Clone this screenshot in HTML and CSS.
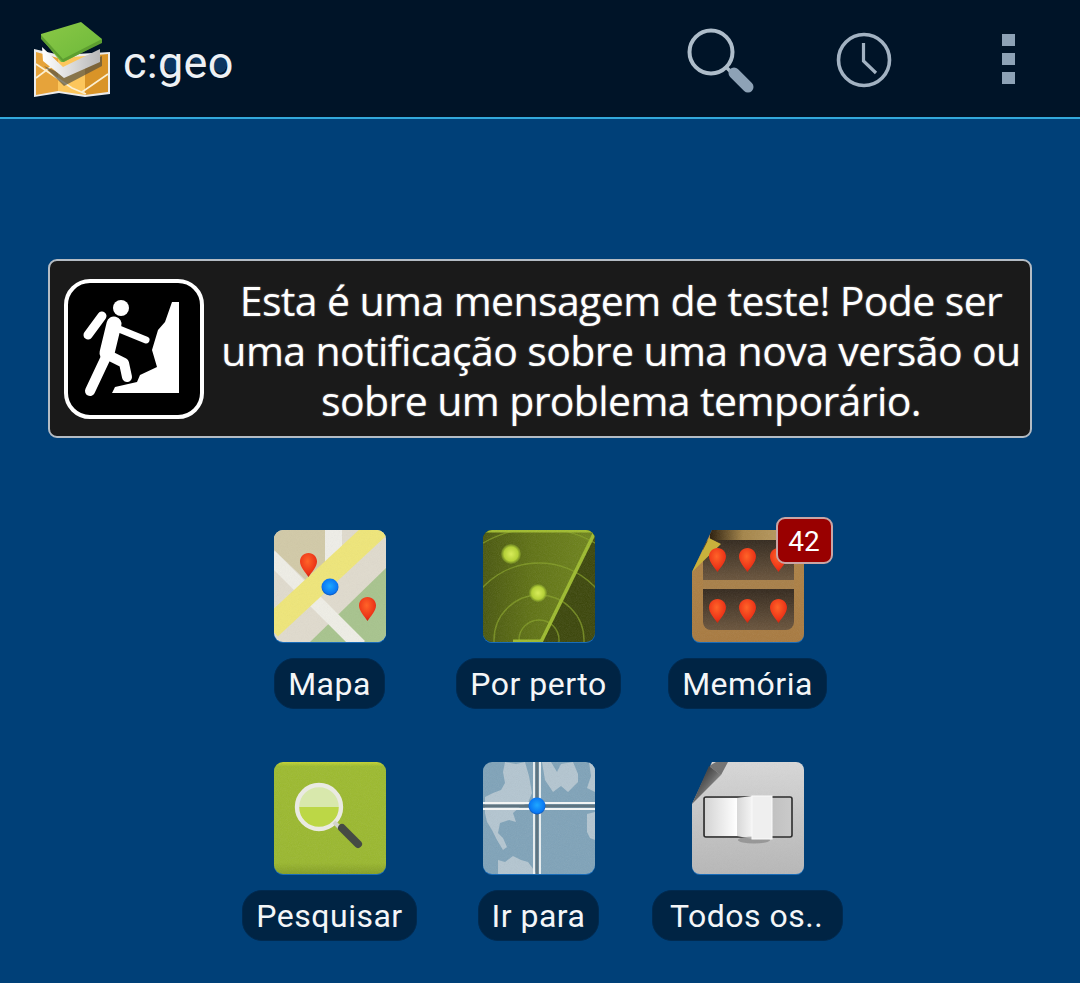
FILE: index.html
```html
<!DOCTYPE html>
<html lang="pt">
<head>
<meta charset="utf-8">
<title>c:geo</title>
<link rel="stylesheet" href="styles.css">
</head>
<body>
<svg class="defs" aria-hidden="true">
  <defs>
    <radialGradient id="pinFill" cx="45%" cy="35%" r="70%"><stop offset="0" stop-color="#ff6428"/><stop offset=".7" stop-color="#ec3418"/><stop offset="1" stop-color="#c0200f"/></radialGradient>
    <radialGradient id="blueDot" cx="50%" cy="45%" r="55%"><stop offset="0" stop-color="#1ea8ff"/><stop offset=".8" stop-color="#0a78f4"/><stop offset="1" stop-color="#0a50b0"/></radialGradient>
    <radialGradient id="radarDot" cx="50%" cy="50%" r="50%"><stop offset="0" stop-color="#d8ec5a"/><stop offset=".7" stop-color="#b4d038"/><stop offset="1" stop-color="#8aa82a" stop-opacity=".4"/></radialGradient>
    <linearGradient id="radarSweep" x1="0" y1="0" x2="1" y2="0"><stop offset="0" stop-color="#48560c"/><stop offset=".45" stop-color="#5f7212"/><stop offset="1" stop-color="#6e841a"/></linearGradient>
    <linearGradient id="greenBody" x1="0" y1="0" x2="0" y2="1"><stop offset="0" stop-color="#c4d432"/><stop offset=".04" stop-color="#9dbb2e"/><stop offset=".9" stop-color="#9ab82e"/><stop offset="1" stop-color="#849f24"/></linearGradient>
    <linearGradient id="silverBody" x1="0" y1="0" x2="0" y2="1"><stop offset="0" stop-color="#d8d8d8"/><stop offset=".5" stop-color="#c6c6c6"/><stop offset="1" stop-color="#b8b8b8"/></linearGradient>
    <linearGradient id="woodBody" x1="0" y1="0" x2="0" y2="1"><stop offset="0" stop-color="#b08448"/><stop offset="1" stop-color="#a87a40"/></linearGradient>
    <linearGradient id="shelfBack" x1="0" y1="0" x2="0" y2="1"><stop offset="0" stop-color="#33291e"/><stop offset=".45" stop-color="#6a543c"/><stop offset=".5" stop-color="#2e241a"/><stop offset="1" stop-color="#6a543c"/></linearGradient>
    <linearGradient id="rollTop" x1="0" y1="0" x2="1" y2="0"><stop offset="0" stop-color="#2a1c0a"/><stop offset=".35" stop-color="#a48448"/><stop offset="1" stop-color="#c4a66c"/></linearGradient>
    <linearGradient id="slotLeft" x1="0" y1="0" x2="1" y2="0"><stop offset="0" stop-color="#d4d4d4"/><stop offset="1" stop-color="#ffffff"/></linearGradient>
    <linearGradient id="slotBend" x1="0" y1="0" x2="1" y2="0"><stop offset="0" stop-color="#d8d8d8"/><stop offset="1" stop-color="#f4f4f4"/></linearGradient>
    <linearGradient id="slotRight" x1="0" y1="0" x2="1" y2="0"><stop offset="0" stop-color="#a4a4a4"/><stop offset="1" stop-color="#cacaca"/></linearGradient>
    <linearGradient id="foldSilver" x1="0" y1="0" x2="1" y2="1"><stop offset="0" stop-color="#111"/><stop offset=".5" stop-color="#666"/><stop offset="1" stop-color="#e0e0e0"/></linearGradient>
    <linearGradient id="logoGreen" x1="0" y1="0" x2="1" y2="1"><stop offset="0" stop-color="#8ac846"/><stop offset="1" stop-color="#6cb83a"/></linearGradient>
    <linearGradient id="logoWhite" x1="0" y1="0" x2="1" y2="0"><stop offset="0" stop-color="#fff"/><stop offset="1" stop-color="#b8b8b8"/></linearGradient>
    <filter id="grain" x="0" y="0" width="100%" height="100%"><feTurbulence type="fractalNoise" baseFrequency="1.1" numOctaves="2" seed="4"/><feColorMatrix type="saturate" values="0"/></filter>
    <g id="pin"><path d="M8.5 0C3.6 0 0 3.8 0 8.6 0 14 5.4 19.5 8.5 24 11.6 19.5 17 14 17 8.6 17 3.8 13.4 0 8.5 0Z" fill="url(#pinFill)"/></g>
    <clipPath id="roundClip"><rect width="112" height="112" rx="9"/></clipPath>
    <clipPath id="cutClip"><path d="M20 0H104a8 8 0 0 1 8 8V104a8 8 0 0 1-8 8H8a8 8 0 0 1-8-8V42Z"/></clipPath>
  </defs>
</svg>

<header class="appbar">
  <div class="brand">
    <svg class="logo" viewBox="0 0 80 78" width="80" height="78" aria-hidden="true">
      <path d="M2 27 28 33 78 30V72L53 75 27 71 2 75Z" fill="#ececec"/>
      <path d="M4 30 26 36V69L4 73Z" fill="#e6a33a"/>
      <path d="M26 36 53 34V73L26 69Z" fill="#fcc65c"/>
      <path d="M53 34 76 32V70L53 73Z" fill="#d99428"/>
      <path d="M4 42 40 66 54 72M4 56 20 44M50 70 76 52M30 52 50 40" stroke="#fbefd2" stroke-width="1.6" fill="none"/>
      <path d="M12 44 32 64 70 44V34L30 52Z" fill="#4a4a42" opacity=".65"/>
      <path d="M10 25 31 45 68 27V40L32 56 11 39Z" fill="url(#logoWhite)"/>
      <path d="M9 12 49 0 70 17 70 20 32 40 29 40 9 16Z" fill="url(#logoGreen)"/>
      <path d="M9 13 31 37 70 17V21L31 40 9 17Z" fill="#5d9e30"/>
    </svg>
    <span class="title">c:geo</span>
  </div>
  <nav class="actions">
    <div class="action search">
      <svg viewBox="0 0 80 80" width="80" height="80" aria-hidden="true">
        <circle cx="31" cy="31" r="21.5" fill="none" stroke="#aebdca" stroke-width="4"/>
        <path d="M46 46 52 52" stroke="#aebdca" stroke-width="3.5"/>
        <path d="M54 52 68 66" stroke="#8da2b6" stroke-width="11" stroke-linecap="round"/>
      </svg>
    </div>
    <div class="action">
      <svg viewBox="0 0 60 60" width="60" height="60" aria-hidden="true">
        <circle cx="30" cy="30" r="25.5" fill="none" stroke="#a2b2c2" stroke-width="3.6"/>
        <path d="M29.5 13V31L42 43" fill="none" stroke="#a2b2c2" stroke-width="3.2"/>
      </svg>
    </div>
    <div class="action menu">
      <span class="dot"></span><span class="dot"></span><span class="dot"></span>
    </div>
  </nav>
</header>

<main class="content">
  <section class="notice">
    <svg class="notice-icon" viewBox="0 0 140 140" width="140" height="140" aria-hidden="true">
      <rect x="2" y="2" width="136" height="136" rx="24" fill="#000" stroke="#fff" stroke-width="4"/>
      <circle cx="57" cy="29" r="8" fill="#fff"/>
      <path d="M38 37 24 56" stroke="#fff" stroke-width="9" stroke-linecap="round"/>
      <path d="M50 45 43 74" stroke="#fff" stroke-width="15" stroke-linecap="round"/>
      <path d="M55 50 82 61" stroke="#fff" stroke-width="7" stroke-linecap="round"/>
      <path d="M42 78 26 112" stroke="#fff" stroke-width="10" stroke-linecap="round"/>
      <path d="M44 76 60 84 63 98" fill="none" stroke="#fff" stroke-width="10" stroke-linecap="round" stroke-linejoin="round"/>
      <path d="M108 23H115V114H48L51 108 73 103 76 96 93 88 88 71 94 51 101 43Z" fill="#fff"/>
    </svg>
    <p class="notice-text">Esta é uma mensagem de teste! Pode ser<br>uma notificação sobre uma nova versão ou<br>sobre um problema temporário.</p>
  </section>

  <section class="launcher">
    <a class="tile">
      <svg class="tile-icon" viewBox="0 0 112 112" aria-hidden="true">
        <g clip-path="url(#roundClip)">
          <rect width="112" height="112" fill="#e0dbce"/>
          <path d="M0 0H51V48L38 56 0 20Z" fill="#d2caa8"/>
          <path d="M112 38 36 112H112Z" fill="#a8c48e"/>
          <path d="M51 0H68V40H51Z" fill="#efeee8"/>
          <path d="M-4 26 86 116" stroke="#efeee6" stroke-width="14"/>
          <path d="M106 -4-4 98" stroke="#efe67a" stroke-width="23"/>
          <rect width="112" height="112" filter="url(#grain)" opacity=".08"/>
        </g>
        <circle cx="56" cy="57" r="8.5" fill="url(#blueDot)"/>
        <use href="#pin" x="26" y="23"/>
        <use href="#pin" x="85" y="67"/>
      </svg>
      <span class="label">Mapa</span>
    </a>
    <a class="tile">
      <svg class="tile-icon" viewBox="0 0 112 112" aria-hidden="true">
        <g clip-path="url(#roundClip)">
          <rect width="112" height="112" fill="#3a4508"/>
          <path d="M0 0H112L58 112H0Z" fill="url(#radarSweep)"/>
          <g fill="none" stroke="#87a226" stroke-width="1.4" opacity=".7">
            <circle cx="56" cy="110" r="20"/>
            <circle cx="56" cy="110" r="45"/>
            <circle cx="56" cy="110" r="77"/>
            <circle cx="56" cy="110" r="112"/>
          </g>
          <path d="M112 2 58 112" stroke="#9dbb2c" stroke-width="3.5"/>
          <path d="M0 1H112" stroke="#a0bc2c" stroke-width="3"/>
          <path d="M30 111H60" stroke="#9dbb2c" stroke-width="3"/>
          <rect width="112" height="112" filter="url(#grain)" opacity=".14"/>
        </g>
        <circle cx="28" cy="24" r="10" fill="url(#radarDot)"/>
        <circle cx="55" cy="63" r="9" fill="url(#radarDot)"/>
      </svg>
      <span class="label">Por perto</span>
    </a>
    <a class="tile">
      <span class="icon-wrap">
        <svg class="tile-icon" viewBox="0 0 112 112" aria-hidden="true">
          <g clip-path="url(#cutClip)">
            <rect width="112" height="112" fill="url(#woodBody)"/>
            <rect x="11" y="10" width="91" height="90" rx="8" fill="url(#shelfBack)"/>
            <rect x="11" y="50" width="91" height="9" fill="#a87f48"/>
            <rect x="18" y="0" width="94" height="10" fill="url(#rollTop)"/>
            <rect width="112" height="112" filter="url(#grain)" opacity=".1"/>
          </g>
          <path d="M0 42 17 8 29 14Z" fill="#c9b23c"/>
          <use href="#pin" x="17" y="18"/>
          <use href="#pin" x="47" y="18"/>
          <use href="#pin" x="78" y="18"/>
          <use href="#pin" x="17" y="69"/>
          <use href="#pin" x="47" y="69"/>
          <use href="#pin" x="78" y="69"/>
        </svg>
        <span class="badge">42</span>
      </span>
      <span class="label">Memória</span>
    </a>
    <a class="tile">
      <svg class="tile-icon" viewBox="0 0 112 112" aria-hidden="true">
        <g clip-path="url(#roundClip)">
          <rect width="112" height="112" fill="url(#greenBody)"/>
          <rect width="112" height="112" filter="url(#grain)" opacity=".12"/>
        </g>
        <circle cx="45" cy="45" r="22" fill="#bcd746"/>
        <path d="M23 45a22 22 0 0 1 44 0Z" fill="#d8e8ac"/>
        <circle cx="45" cy="45" r="22" fill="none" stroke="#eaeae2" stroke-width="4.4"/>
        <path d="M60 60 67 67" stroke="#d4d4cc" stroke-width="4"/>
        <path d="M68 66 84 82" stroke="#454a44" stroke-width="8" stroke-linecap="round"/>
      </svg>
      <span class="label">Pesquisar</span>
    </a>
    <a class="tile">
      <svg class="tile-icon" viewBox="0 0 112 112" aria-hidden="true">
        <g clip-path="url(#roundClip)">
          <rect width="112" height="112" fill="#7fa3b9"/>
          <g fill="#b4c6d1">
            <path d="M22 0 33 2 42 0 46 14 49 31 45 41 38 44 30 51 33 60 26 58 17 61 15 71 20 76 24 85 20 88 14 78 9 68 4 60 2 51 2 35 10 31 18 28 22 21 20 10Z"/>
            <path d="M15 98 22 100 30 94 38 98 45 100 54 112H15Z"/>
            <path d="M59 0H68L74 10 78 2 90 0 95 12 95 20 85 30 78 24 70 30 62 18Z"/>
            <path d="M104 52 112 50V78L107 76 104 70Z"/>
            <path d="M106 0H112V30L104 26 108 14Z"/>
          </g>
          <rect width="112" height="112" filter="url(#grain)" opacity=".12"/>
          <path d="M51 0V112M57 0V112M0 41H112M0 47H112" fill="none" stroke="#f2f4f4" stroke-width="1.8"/>
          <path d="M54 0V112M0 44H112" fill="none" stroke="#5f7480" stroke-width="3"/>
        </g>
        <circle cx="54" cy="44" r="8.5" fill="url(#blueDot)"/>
      </svg>
      <span class="label">Ir para</span>
    </a>
    <a class="tile">
      <svg class="tile-icon" viewBox="0 0 112 112" aria-hidden="true">
        <g clip-path="url(#cutClip)">
          <rect width="112" height="112" fill="url(#silverBody)"/>
          <rect width="112" height="112" filter="url(#grain)" opacity=".07"/>
        </g>
        <path d="M0 42 17 4 29 13Z" fill="url(#foldSilver)"/>
        <path d="M17 4 24 0H36L29 13Z" fill="#333" opacity=".6"/>
        <rect x="12" y="35" width="88" height="40" rx="2" fill="url(#slotRight)" stroke="#2c2c2c" stroke-width="1.6"/>
        <rect x="13" y="36" width="32" height="38" fill="url(#slotLeft)"/>
        <path d="M45 36 60 34V77L45 74Z" fill="url(#slotBend)"/>
        <ellipse cx="62" cy="78" rx="16" ry="3.5" fill="#777" opacity=".55"/>
        <rect x="60" y="34" width="20" height="43" fill="#efefef" stroke="#fafafa" stroke-width="1"/>
      </svg>
      <span class="label label-long">Todos os..</span>
    </a>
  </section>
</main>
</body>
</html>
```

FILE: styles.css
```css
* { box-sizing: border-box; }

html, body {
  margin: 0;
  height: 100%;
}

body {
  background: #004078;
  color: #fff;
  font-family: "Roboto", "Liberation Sans", sans-serif;
  overflow: hidden;
}

.defs {
  position: absolute;
  width: 0;
  height: 0;
}

.appbar {
  display: flex;
  align-items: center;
  justify-content: space-between;
  height: 119px;
  background: #001428;
  border-bottom: 2px solid #33a9dc;
}

.brand {
  display: flex;
  align-items: center;
  padding-left: 32px;
}

.logo {
  display: block;
  margin-top: 5px;
  filter: blur(.4px);
}

.title {
  margin-left: 11px;
  margin-top: 8px;
  font-size: 45px;
  letter-spacing: .3px;
  line-height: 1;
  color: #eef1f4;
  background:
    radial-gradient(ellipse 7px 9px at 48px 24px, #0a3560 95%, transparent),
    radial-gradient(ellipse 7px 4px at 75px 19px, #0a3560 95%, transparent),
    radial-gradient(ellipse 7px 9px at 97px 24px, #0a3560 95%, transparent);
}

.actions {
  display: flex;
  align-items: stretch;
  height: 117px;
}

.action {
  width: 144px;
  display: flex;
  align-items: center;
  justify-content: center;
}

.action svg {
  display: block;
  margin-top: 2px;
  filter: blur(.4px);
}

.action.search svg {
  margin-top: 4px;
}

.menu {
  flex-direction: column;
  gap: 7px;
}

.dot {
  display: block;
  width: 13px;
  height: 12px;
  background: #8da2b6;
}

.content {
  padding-top: 140px;
}

.notice {
  display: flex;
  align-items: center;
  margin: 0 48px;
  height: 179px;
  padding: 0 0 0 14px;
  background: #1a1a1a;
  border: 2px solid #b4bcc4;
  border-radius: 9px;
}

.notice-icon {
  flex: none;
  display: block;
  filter: blur(.7px);
}

.notice-text {
  flex: 1;
  margin: 2px 0 0 8px;
  font-family: "Open Sans", "Noto Sans", sans-serif;
  font-size: 41px;
  font-weight: 500;
  letter-spacing: -.6px;
  line-height: 50px;
  text-align: center;
  color: #fff;
  white-space: nowrap;
  text-shadow: 0 0 2px rgba(255, 255, 255, .45);
}

.launcher {
  display: grid;
  grid-template-columns: repeat(3, 209px);
  justify-content: center;
  row-gap: 53px;
  margin-top: 92px;
  padding-right: 3px;
}

.tile {
  display: flex;
  flex-direction: column;
  align-items: center;
  gap: 16px;
}

.icon-wrap {
  position: relative;
  display: block;
  width: 112px;
  height: 112px;
}

.tile-icon {
  display: block;
  width: 112px;
  height: 112px;
  filter: blur(.5px) drop-shadow(0 1px 0 #1a6cb8);
}

.label {
  display: block;
  height: 51px;
  padding: 0 13px;
  border-radius: 20px;
  background: #002444;
  border: 1px solid #002a50;
  color: #f4f6f8;
  font-size: 32px;
  letter-spacing: .5px;
  line-height: 51px;
  white-space: nowrap;
}

.label-long {
  padding: 0 19px 0 17px;
}

.badge {
  position: absolute;
  left: 84px;
  top: -13px;
  width: 57px;
  height: 47px;
  border: 2px solid #c9a5a5;
  border-radius: 9px;
  background: #990000;
  color: #fff;
  font-size: 28px;
  line-height: 45px;
  text-align: center;
}
```
